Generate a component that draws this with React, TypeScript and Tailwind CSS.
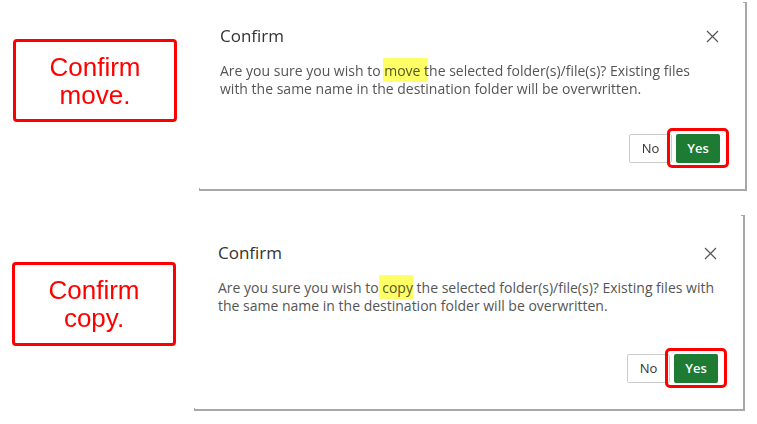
import React from 'react';

interface NoteProps {
  lines: string[];
  className: string;
}

// red callout box on the left
const Note = ({ lines, className }: NoteProps) => (
  <div
    className={`flex flex-col items-center justify-center w-[164px] border-[3px] border-[#ff0000] rounded-[4px] text-[#ff0000] text-[26px] leading-[28px] text-center shrink-0 ${className}`}
    style={{ fontFamily: '"Liberation Sans", Arial, sans-serif' }}
  >
    {lines.map((l) => (
      <span key={l}>{l}</span>
    ))}
  </div>
);

const CloseIcon = () => (
  <svg width="13" height="13" viewBox="0 0 13 13" className="text-[#555]">
    <path d="M1 1L12 12M12 1L1 12" stroke="currentColor" strokeWidth="1.2" fill="none" />
  </svg>
);

interface DialogProps {
  verb: 'move' | 'copy';
  className: string;
  padTop: string;
  padLeft: string;
}

const ConfirmDialog = ({ verb, className, padTop, padLeft }: DialogProps) => {
  const isMove = verb === 'move';

  return (
    <div
      className={`relative flex flex-col border-r-2 border-b-2 border-[#a8a8a8] bg-white pr-[25px] ${padTop} ${padLeft} ${className}`}
      style={{ fontFamily: '"Open Sans", "Noto Sans", sans-serif' }}
    >
      {/* shadow corner ticks */}
      <span className="absolute top-0 right-[-2px] w-[4px] h-[1px] bg-[#a8a8a8]" />
      <span className="absolute bottom-[-2px] left-[-1px] w-[1px] h-[3px] bg-[#a8a8a8]" />

      {/* Header */}
      <div className="flex items-center justify-between">
        <h2 className="text-[17px] leading-[24px] text-[#333]">Confirm</h2>
        <button className="mr-[1px] flex items-center justify-center">
          <CloseIcon />
        </button>
      </div>

      {/* Message */}
      <p className="mt-[14px] text-[14px] leading-[17.5px] text-[#555]">
        Are you sure you wish to{' '}
        <span className="relative">
          {verb}
          <span
            className={`absolute -top-[3px] -bottom-[2px] bg-[#ffff00]/60 mix-blend-multiply ${
              isMove ? '-left-[1px] -right-[8px]' : '-left-[3px] right-0'
            }`}
          />
        </span>{' '}
        the selected folder(s)/file(s)? Existing files{isMove ? '' : ' with'}
        <br />
        {isMove ? 'with ' : ''}the same name in the destination folder will be overwritten.
      </p>

      {/* Actions */}
      <div className="mt-auto mb-[26px] flex justify-end gap-[4px]">
        <button className="w-[43px] h-[29px] border border-[#cccccc] rounded-[2px] bg-white text-[13px] text-[#333]">
          No
        </button>
        <div className="relative">
          <button className="w-[44px] h-[29px] rounded-[2px] bg-[#1e7b34] text-[13px] font-semibold text-white">
            Yes
          </button>
          <span className="absolute -left-[9px] -right-[9px] -top-[6px] -bottom-[5px] border-[3px] border-[#ff0000] rounded-[5px] pointer-events-none" />
        </div>
      </div>
    </div>
  );
};

export default function App() {
  return (
    <div className="w-[757px] h-[424px] bg-white overflow-hidden flex flex-col">
      <div className="flex items-start">
        <Note lines={['Confirm', 'move.']} className="ml-[13px] mt-[39px] h-[83px]" />
        <ConfirmDialog
          verb="move"
          className="ml-[23px] mt-[2px] w-[547px] h-[189px]"
          padTop="pt-[22px]"
          padLeft="pl-[20px]"
        />
      </div>
      <div className="flex items-start mt-[24px]">
        <Note lines={['Confirm', 'copy.']} className="ml-[12px] mt-[47px] h-[84px]" />
        <ConfirmDialog
          verb="copy"
          className="ml-[19px] w-[550px] h-[196px]"
          padTop="pt-[26px]"
          padLeft="pl-[23px]"
        />
      </div>
    </div>
  );
}
